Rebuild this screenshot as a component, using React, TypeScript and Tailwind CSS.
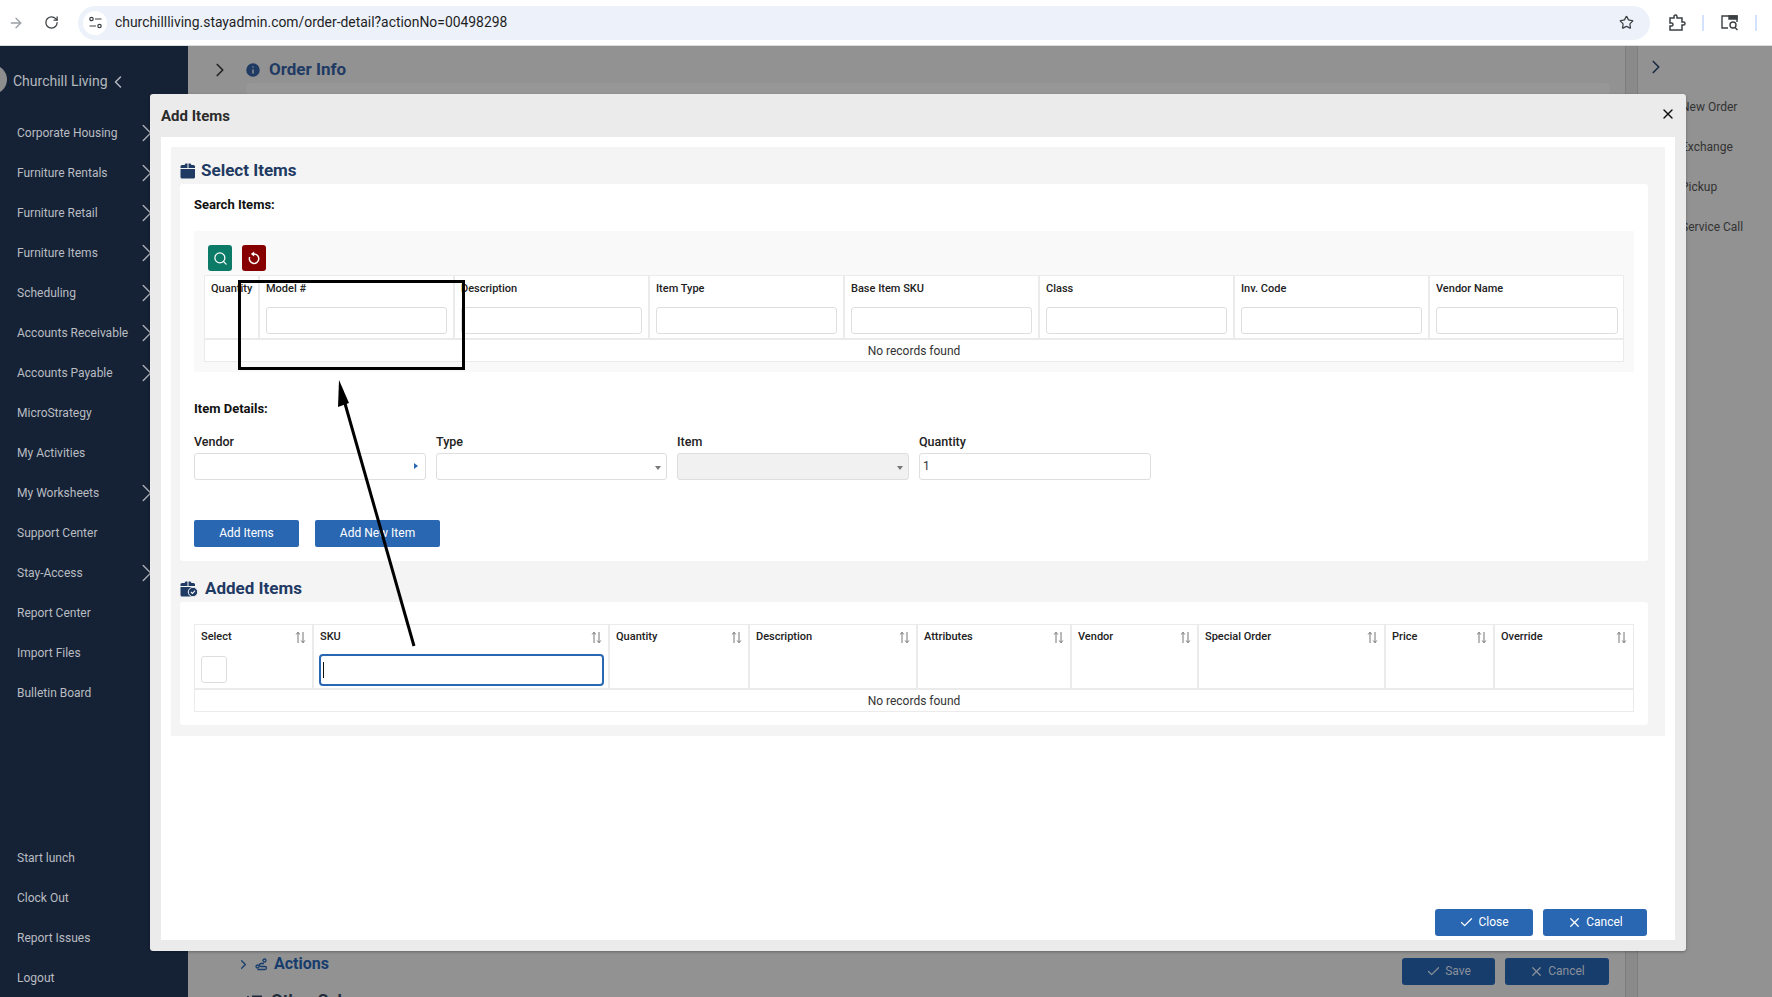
import React from "react";
import { ChevronRight, ChevronLeft, RotateCw, Star, Search, X, Check, ArrowRight, Info } from "lucide-react";

const navTop = ["Corporate Housing", "Furniture Rentals", "Furniture Retail", "Furniture Items", "Scheduling", "Accounts Receivable", "Accounts Payable", "MicroStrategy", "My Activities", "My Worksheets", "Support Center", "Stay-Access", "Report Center", "Import Files", "Bulletin Board"];
const withChevron = new Set(["Corporate Housing", "Furniture Rentals", "Furniture Retail", "Furniture Items", "Scheduling", "Accounts Receivable", "Accounts Payable", "My Worksheets", "Stay-Access"]);
const navBottom = ["Start lunch", "Clock Out", "Report Issues", "Logout"];
const searchCols = ["Model #", "Description", "Item Type", "Base Item SKU", "Class", "Inv. Code", "Vendor Name"];
const addedCols: [string, string][] = [
  ["Select", "w-[119px]"],
  ["SKU", "w-[296px]"],
  ["Quantity", "w-[140px]"],
  ["Description", "w-[168px]"],
  ["Attributes", "w-[154px]"],
  ["Vendor", "w-[127px]"],
  ["Special Order", "w-[187px]"],
  ["Price", "w-[109px]"],
  ["Override", "flex-1"],
];

function SortIcon() {
  return (
    <svg width="11" height="13" viewBox="0 0 11 13" fill="none" stroke="#777" strokeWidth="1">
      <path d="M3 12V1.5M1.2 3.5 3 1.2l1.8 2.3" />
      <path d="M8 1v10.5M6.2 9.5 8 11.8l1.8-2.3" />
    </svg>
  );
}

function BoxIcon({ check }: { check?: boolean }) {
  return (
    <svg width="18" height="16" viewBox="0 0 18 16">
      <path d="M0.5 6h14.500v8a1.500 1.500 0 0 1-1.500 1.500h-11.500a1.500 1.500 0 0 1-1.500-1.500z" fill="#1f3a63" />
      <path d="M0.500 5V3.500A1.500 1.500 0 0 1 2 2h2.500l1-1.500h2V5zM8.500 0.500h2l1 1.500h2a1.500 1.500 0 0 1 1.500 1.500V5H8.500z" fill="#1f3a63" />
      {check && <circle cx="13" cy="11" r="4.700" fill="#1f3a63" stroke="#f4f4f4" strokeWidth="1" />}
      {check && <path d="M11 11l1.500 1.500 2.500-2.800" fill="none" stroke="#fff" strokeWidth="1.100" />}
    </svg>
  );
}

function Field({ label, disabled, arrow, value, width }: { label: string; disabled?: boolean; arrow?: "right" | "down"; value?: string; width: string }) {
  return (
    <div className={width}>
      <div className="h-[21px] text-[12.500px] font-medium text-[#222] leading-[19px]">{label}</div>
      <div className={`h-[27px] rounded-[3px] border border-[#dedede] flex items-center justify-between px-[3px] pb-[1px] text-[12px] text-[#333] ${disabled ? "bg-[#f1f1f1]" : "bg-white"}`}>
        <span>{value}</span>
        {arrow === "right" && <span className="w-0 h-0 mr-[4px] border-y-[3px] border-y-transparent border-l-[4px] border-l-[#2a67b2]" />}
        {arrow === "down" && <span className="w-0 h-0 mr-[2px] mt-[3px] border-x-[3px] border-x-transparent border-t-[4px] border-t-[#777]" />}
      </div>
    </div>
  );
}

export default function App() {
  return (
    <div className="relative w-[1772px] h-[997px] overflow-hidden flex flex-col bg-[#929292] font-['Roboto',sans-serif]">
      {/* Browser bar */}
      <div className="h-[46px] bg-white border-b border-[#dadce0] flex items-center shrink-0">
        <ArrowRight size={16} className="ml-[8px] text-[#9aa0a6]" strokeWidth={2} />
        <RotateCw size={15} className="ml-[20px] text-[#3c4043]" strokeWidth={2} />
        <div className="ml-[19px] w-[1572px] h-[34px] rounded-full bg-[#edf2fa] flex items-center">
          <span className="ml-[5px] w-[24px] h-[24px] rounded-full bg-white flex items-center justify-center">
            <svg width="13" height="13" viewBox="0 0 13 13" fill="none" stroke="#3c4043" strokeWidth="1.200">
              <circle cx="2.500" cy="3" r="1.700" />
              <path d="M6 3h6.500M0.500 10H7" />
              <circle cx="10.500" cy="10" r="1.700" />
            </svg>
          </span>
          <span className="ml-[8px] text-[13.900px] text-[#1f1f1f]">churchillliving.stayadmin.com/order-detail?actionNo=00498298</span>
          <Star size={15} className="ml-auto mr-[16px] text-[#3c4043]" strokeWidth={2} />
        </div>
        <svg className="ml-[18px]" width="18" height="18" viewBox="0 0 18 18" fill="none" stroke="#3c4043" strokeWidth="1.500">
          <path d="M2 4h4V2.500a1.500 1.500 0 0 1 3 0V4h5v4h1.500a1.500 1.500 0 0 1 0 3H14v5H2v-4h1.500a1.500 1.500 0 0 0 0-3H2z" />
        </svg>
        <span className="ml-[16px] w-[2px] h-[16px] bg-[#d3e3fd]" />
        <svg className="ml-[17px]" width="18" height="16" viewBox="0 0 18 16" fill="none" stroke="#3c4043" strokeWidth="1.400">
          <path d="M7 13H1V1h15v6" />
          <path d="M8 1h8v3H8z" fill="#3c4043" />
          <circle cx="12" cy="10" r="3" />
          <path d="M14 12.500l2.500 2.500" />
        </svg>
        <span className="ml-[16px] w-[2px] h-[16px] bg-[#d3e3fd]" />
      </div>

      <div className="flex-1 flex min-h-0">
        {/* Sidebar */}
        <aside className="w-[188px] shrink-0 bg-[#152236] text-[#b9bcc1] flex flex-col justify-between text-[12px]">
          <div>
            <div className="h-[66px] relative flex items-start pt-[26px] pl-[13px] text-[14px] text-[#b4b8bd]">
              <span className="absolute left-[-22px] top-[19px] w-[29px] h-[29px] rounded-full bg-[#8e8e8e]" />
              <span className="leading-[19px]">Churchill Living</span>
              <ChevronLeft size={20} className="text-[#b4b8bd]" strokeWidth={1.800} />
            </div>
            {navTop.map((n) => (
              <div key={n} className="h-[40px] pl-[17px] pt-[2px] flex items-center justify-between">
                <span>{n}</span>
                {withChevron.has(n) && <ChevronRight size={30} strokeWidth={1.200} className="mr-[26px] text-[#a7abb1]" />}
              </div>
            ))}
          </div>
          <div>
            {navBottom.map((n) => (
              <div key={n} className="h-[40px] pl-[17px] pt-[2px] flex items-center">{n}</div>
            ))}
          </div>
        </aside>

        {/* Page behind the dialog */}
        <main className="w-[1437px] shrink-0 relative flex flex-col justify-between">
          <div className="flex items-center pl-[21px] pt-[11px] text-[#222]">
            <ChevronRight size={22} strokeWidth={1.800} />
            <Info size={18} className="ml-[13px] fill-[#1f3a63] text-[#929292]" strokeWidth={2} />
            <span className="ml-[7px] text-[17px] font-bold text-[#1f3a63]">Order Info</span>
          </div>
          <div className="mx-[58px] mb-[12px] flex items-end">
            <div className="ml-[-10px] mb-[-28px] flex flex-col">
              <div className="flex items-center text-[#173d6d] h-[24px]">
                <ChevronRight size={15} />
                <svg className="ml-[4px]" width="13" height="13" viewBox="0 0 13 13" fill="none" stroke="#173d6d" strokeWidth="1.300">
                  <circle cx="2.500" cy="8.500" r="1.500" />
                  <circle cx="9.500" cy="2.500" r="1.500" />
                  <path d="M9 5.500H6a1.500 1.500 0 0 0 0 3h4a1.500 1.500 0 0 1 0 3H2.500" />
                </svg>
                <span className="ml-[6px] text-[16px] font-bold">Actions</span>
              </div>
              <div className="flex items-center h-[24px] mt-[13px] pl-[11px] text-[#1f2a3a]">
                <svg width="15" height="12" viewBox="0 0 15 12" fill="none" stroke="#1f2a3a" strokeWidth="1.800">
                  <path d="M1 1v1M1 6v1M1 11v1M5 1.500h10M5 6.500h10M5 11h10" />
                </svg>
                <span className="ml-[9px] text-[17px] font-bold">Other Sub</span>
              </div>
            </div>
            <div className="ml-auto mr-[-42px] flex gap-[10px]">
              <div className="w-[93px] h-[27px] rounded-[3px] bg-[#173d6d] text-[#8a9099] text-[12px] pb-[1px] flex items-center justify-center gap-[4px]">
                <Check size={15} />Save
              </div>
              <div className="w-[104px] h-[27px] rounded-[3px] bg-[#173d6d] text-[#8a9099] text-[12px] pb-[1px] flex items-center justify-center gap-[4px]">
                <X size={15} />Cancel
              </div>
            </div>
          </div>
          <div className="absolute left-[58px] top-[37px] w-[1364px] h-[20px] bg-[#979797] rounded-t-[4px]" />
        </main>
        <div className="w-[13px] shrink-0 bg-[#8a8a8a] border-x border-[#7d7d7d]" />

        {/* Right actions */}
        <aside className="flex-1 text-[12px] text-[#333] pl-[7px]">
          <ChevronRight size={22} strokeWidth={1.800} className="mt-[10px] text-[#1a2a42]" />
          <div className="mt-[9px] pl-[36px]">
            {["New Order", "Exchange", "Pickup", "Service Call"].map((t) => (
              <div key={t} className="h-[40px] flex items-center whitespace-nowrap">{t}</div>
            ))}
          </div>
        </aside>
      </div>

      {/* Dialog */}
      <div className="absolute left-[150px] top-[94px] w-[1536px] h-[857px] bg-[#ebebeb] rounded-[3px] flex flex-col shadow-[0_1px_3px_rgba(0,0,0,0.3)] text-[#222]">
        <div className="h-[43px] shrink-0 flex items-center justify-between pl-[11px] pr-[10px]">
          <span className="text-[15px] font-bold text-[#2b2b2b] pt-[1px]">Add Items</span>
          <X size={16} className="text-[#111] mb-[4px]" strokeWidth={2} />
        </div>
        <div className="mx-[11px] h-[803px] bg-white pt-[10px] px-[10px] relative">
          <div className="bg-[#f4f4f4] h-[589px] px-[9px]">
            <div className="h-[37px] flex items-center gap-[3px] pt-[10px]">
              <BoxIcon />
              <span className="text-[17px] font-bold text-[#1f3a63]">Select Items</span>
            </div>
            <div className="bg-white h-[377px] w-[1468px] rounded-[3px] px-[14px]">
              <div className="h-[47px] pt-[14px] text-[13px] font-bold text-[#111] leading-[14px]">Search Items:</div>
              <div className="bg-[#f9f9f9] h-[141px] w-[1440px] px-[10px] pt-[14px]">
                <div className="flex gap-[10px] h-[26px] pl-[4px]">
                  <div className="w-[24px] h-[26px] rounded-[3px] bg-[#0b7a66] flex items-center justify-center">
                    <Search size={15} className="text-white" strokeWidth={2} />
                  </div>
                  <div className="w-[24px] h-[26px] rounded-[3px] bg-[#860000] flex items-center justify-center">
                    <svg width="14" height="14" viewBox="0 0 14 14" fill="none" stroke="#fff" strokeWidth="1.500">
                      <path d="M7 3a4.700 4.700 0 1 1-4.300 3" />
                      <path d="M7.200 0.500v5L3.800 3z" fill="#fff" stroke="none" />
                    </svg>
                  </div>
                </div>
                <div className="mt-[4px] w-[1420px] border border-[#ebebeb] bg-white">
                  <div className="flex h-[64px] border-b-2 border-[#ebebeb]">
                    <div className="w-[55px] shrink-0 border-r-2 border-[#ebebeb] pl-[6px] pt-[6px] text-[11px] font-medium leading-[14px]">Quantity</div>
                    {searchCols.map((c, i) => (
                      <div key={c} className={`w-[195px] shrink-0 pl-[6px] pt-[6px] text-[11px] font-medium leading-[14px] ${i < 6 ? "border-r-2 border-[#ebebeb] pr-[6px]" : "pr-[7px]"}`}>
                        <div>{c}</div>
                        <input aria-label={c} className="block mt-[11px] w-full h-[27px] rounded-[3px] border border-[#dedede] bg-white outline-none" />
                      </div>
                    ))}
                  </div>
                  <div className="h-[21px] flex items-center justify-center text-[12px] text-[#333]">No records found</div>
                </div>
              </div>
              <div className="h-[49px] pt-[30px] text-[13px] font-bold text-[#111] leading-[14px]">Item Details:</div>
              <div className="flex gap-[10px] mt-[11px]">
                <Field width="w-[232px]" label="Vendor" arrow="right" />
                <Field width="w-[231px]" label="Type" arrow="down" />
                <Field width="w-[232px]" label="Item" arrow="down" disabled />
                <Field width="w-[232px]" label="Quantity" value="1" />
              </div>
              <div className="flex gap-[16px] mt-[40px]">
                <div className="w-[105px] h-[27px] rounded-[2px] bg-[#2a67b2] text-white text-[12px] pb-[1px] flex items-center justify-center">Add Items</div>
                <div className="w-[125px] h-[27px] rounded-[2px] bg-[#2a67b2] text-white text-[12px] pb-[1px] flex items-center justify-center">Add New Item</div>
              </div>
            </div>
            <div className="h-[41px] flex items-center gap-[7px] pt-[15px]">
              <BoxIcon check />
              <span className="text-[17px] font-bold text-[#1f3a63]">Added Items</span>
            </div>
            <div className="bg-white h-[123px] rounded-[3px] px-[14px] pt-[22px] w-[1468px]">
              <div className="border border-[#ebebeb] w-[1440px]">
                <div className="flex h-[65px] border-b-2 border-[#ebebeb]">
                  {addedCols.map(([c, w], i) => (
                    <div key={c} className={`${w} ${i === 8 ? "" : "shrink-0 border-r-2 border-[#ebebeb]"} ${i === 1 ? "pl-[5px] pr-[4px]" : "px-[6px]"} text-[11px] font-medium`}>
                      <div className={`h-[25px] flex items-center justify-between ${i === 1 ? "pl-[1px] pr-[2px]" : ""}`}>
                        <span>{c}</span>
                        <SortIcon />
                      </div>
                      {i === 0 && <div className="mt-[6px] w-[26px] h-[27px] rounded-[3px] border border-[#dedede] bg-white" />}
                      {i === 1 && (
                        <div className="mt-[4px] h-[32px] rounded-[4px] border-[2.500px] border-[#2a67b2] bg-white flex items-center pl-[2px]">
                          <span className="w-[1px] h-[16px] bg-[#111]" />
                        </div>
                      )}
                    </div>
                  ))}
                </div>
                <div className="h-[21px] flex items-center justify-center text-[12px] text-[#333]">No records found</div>
              </div>
            </div>
          </div>
          <div className="absolute right-[28px] top-[772px] flex gap-[10px]">
            <div className="w-[98px] h-[27px] rounded-[3px] bg-[#2a67b2] text-white text-[12px] pb-[1px] flex items-center justify-center gap-[4px]">
              <Check size={15} />Close
            </div>
            <div className="w-[104px] h-[27px] rounded-[3px] bg-[#2a67b2] text-white text-[12px] pb-[1px] flex items-center justify-center gap-[4px]">
              <X size={15} />Cancel
            </div>
          </div>
        </div>
      </div>

      {/* Annotation drawn over the screenshot */}
      <div className="absolute left-[238px] top-[280px] w-[227px] h-[90px] border-[3px] border-black" />
      <svg className="absolute left-[330px] top-[370px]" width="90" height="280" viewBox="0 0 90 280">
        <path d="M84 276 14 30" stroke="#000" strokeWidth="3" fill="none" />
        <path d="M9 10 19 33 8 37z" fill="#000" />
      </svg>
    </div>
  );
}
